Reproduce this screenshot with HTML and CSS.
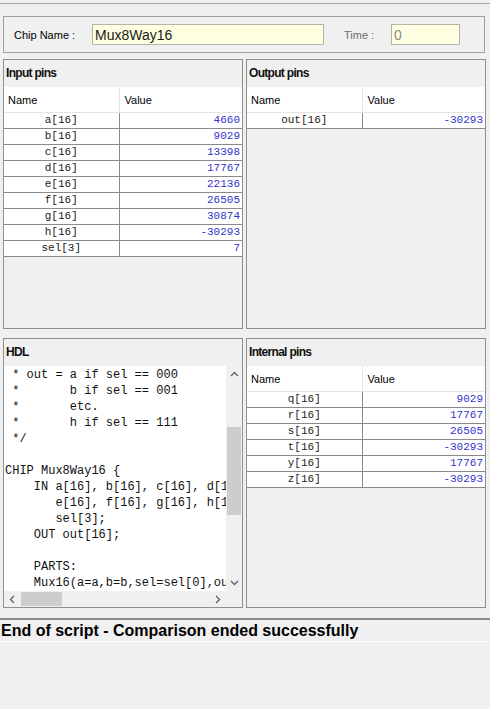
FILE: index.html
```html
<!DOCTYPE html>
<html>
<head>
<meta charset="utf-8">
<link rel="stylesheet" href="styles.css">
</head>
<body>
<div class="app">
  <div class="topstrip"></div>

  <div class="chipbar">
    <span class="lbl chiplbl">Chip Name :</span>
    <div class="field namefield">Mux8Way16</div>
    <span class="lbl timelbl">Time :</span>
    <div class="field timefield">0</div>
  </div>

  <div class="grid">
    <section class="panel">
      <div class="phead">Input pins</div>
      <table class="pins">
        <colgroup><col class="c-name"><col></colgroup>
        <thead><tr><th>Name</th><th>Value</th></tr></thead>
        <tbody>
          <tr><td class="n">a[16]</td><td class="v">4660</td></tr>
          <tr><td class="n">b[16]</td><td class="v">9029</td></tr>
          <tr><td class="n">c[16]</td><td class="v">13398</td></tr>
          <tr><td class="n">d[16]</td><td class="v">17767</td></tr>
          <tr><td class="n">e[16]</td><td class="v">22136</td></tr>
          <tr><td class="n">f[16]</td><td class="v">26505</td></tr>
          <tr><td class="n">g[16]</td><td class="v">30874</td></tr>
          <tr><td class="n">h[16]</td><td class="v">-30293</td></tr>
          <tr><td class="n">sel[3]</td><td class="v">7</td></tr>
        </tbody>
      </table>
    </section>

    <section class="panel">
      <div class="phead">Output pins</div>
      <table class="pins">
        <colgroup><col class="c-name"><col></colgroup>
        <thead><tr><th>Name</th><th>Value</th></tr></thead>
        <tbody>
          <tr><td class="n">out[16]</td><td class="v">-30293</td></tr>
        </tbody>
      </table>
    </section>

    <section class="panel">
      <div class="phead">HDL</div>
      <div class="codebox">
        <pre class="code"> * out = a if sel == 000
 *       b if sel == 001
 *       etc.
 *       h if sel == 111
 */

CHIP Mux8Way16 {
    IN a[16], b[16], c[16], d[16],
       e[16], f[16], g[16], h[16],
       sel[3];
    OUT out[16];

    PARTS:
    Mux16(a=a,b=b,sel=sel[0],out=ab);</pre>
        <div class="vscroll">
          <div class="arrow"><svg width="9" height="6" viewBox="0 0 9 6"><path d="M1 5 L4.5 1.5 L8 5" fill="none" stroke="#606060" stroke-width="1.3"/></svg></div>
          <div class="vtrack"><div class="vthumb"></div></div>
          <div class="arrow"><svg width="9" height="6" viewBox="0 0 9 6"><path d="M1 1 L4.5 4.5 L8 1" fill="none" stroke="#606060" stroke-width="1.3"/></svg></div>
        </div>
        <div class="hscroll">
          <div class="arrow"><svg width="6" height="9" viewBox="0 0 6 9"><path d="M5 1 L1.5 4.5 L5 8" fill="none" stroke="#606060" stroke-width="1.3"/></svg></div>
          <div class="htrack"><div class="hthumb"></div></div>
          <div class="arrow"><svg width="6" height="9" viewBox="0 0 6 9"><path d="M1 1 L4.5 4.5 L1 8" fill="none" stroke="#606060" stroke-width="1.3"/></svg></div>
        </div>
        <div class="corner"></div>
      </div>
    </section>

    <section class="panel">
      <div class="phead">Internal pins</div>
      <table class="pins">
        <colgroup><col class="c-name"><col></colgroup>
        <thead><tr><th>Name</th><th>Value</th></tr></thead>
        <tbody>
          <tr><td class="n">q[16]</td><td class="v">9029</td></tr>
          <tr><td class="n">r[16]</td><td class="v">17767</td></tr>
          <tr><td class="n">s[16]</td><td class="v">26505</td></tr>
          <tr><td class="n">t[16]</td><td class="v">-30293</td></tr>
          <tr><td class="n">y[16]</td><td class="v">17767</td></tr>
          <tr><td class="n">z[16]</td><td class="v">-30293</td></tr>
        </tbody>
      </table>
    </section>
  </div>

  <div class="status">End of script - Comparison ended successfully</div>
</div>
</body>
</html>
```

FILE: styles.css
```css
html, body {
  margin: 0;
  padding: 0;
  background: #f0f0f0;
}
body {
  font-family: "Liberation Sans", Arial, sans-serif;
  color: #000;
}
.app {
  width: 490px;
  height: 709px;
  overflow: hidden;
}
.topstrip {
  height: 3px;
  border-bottom: 1px solid #a8a8a8;
}
.chipbar {
  margin: 12px 0 0 3px;
  width: 480px;
  height: 35px;
  border: 1px solid #a0a0a0;
  display: flex;
  align-items: center;
}
.lbl {
  font-size: 11px;
}
.chiplbl {
  margin-left: 10px;
  width: 78px;
}
.field {
  height: 19px;
  border: 1px solid #b4b4a8;
  background: #ffffe1;
  font-size: 14px;
  line-height: 20px;
  padding-left: 2px;
  box-sizing: content-box;
}
.namefield {
  width: 228px;
  color: #1a1a1a;
}
.timelbl {
  margin-left: 20px;
  width: 47px;
  color: #6e6e6e;
}
.timefield {
  width: 65px;
  color: #8a8a8a;
}

.grid {
  margin: 6px 0 0 3px;
  display: grid;
  grid-template-columns: 240px 240px;
  grid-template-rows: 270px 270px;
  column-gap: 3px;
  row-gap: 9px;
}
.panel {
  border: 1px solid #909090;
  display: flex;
  flex-direction: column;
  overflow: hidden;
}
.phead {
  height: 27px;
  flex: none;
  font-size: 12px;
  font-weight: bold;
  letter-spacing: -0.7px;
  line-height: 27px;
  padding-left: 2px;
  color: #111;
}

.pins {
  width: 100%;
  border-collapse: collapse;
  table-layout: fixed;
}
.c-name {
  width: 115px;
}
.pins th {
  height: 25px;
  background: #fff;
  text-align: left;
  font-weight: normal;
  font-size: 11px;
  padding: 0 0 0 4px;
  border-right: 1px solid #e4e4e4;
  border-bottom: 1px solid #e4e4e4;
}
.pins th:last-child {
  border-right: none;
  padding-left: 5px;
}
.pins td {
  height: 15px;
  padding: 0;
  background: #fff;
  font-family: "Liberation Mono", "Courier New", monospace;
  font-size: 11px;
  line-height: 15px;
  border-bottom: 1px solid #8a8a8a;
  color: #222;
}
.pins td.n {
  text-align: center;
  border-right: 1px solid #8a8a8a;
}
.pins td.v {
  text-align: right;
  padding-right: 2px;
  color: #3333cc;
}

.codebox {
  flex: 1;
  display: grid;
  grid-template-columns: 1fr 16px;
  grid-template-rows: 1fr 16px;
  min-height: 0;
}
.code {
  margin: 0;
  background: #fff;
  font-family: "Liberation Mono", "Courier New", monospace;
  font-size: 12px;
  line-height: 16px;
  padding: 1px 0 0 1px;
  overflow: hidden;
  white-space: pre;
  color: #111;
}
.vscroll {
  display: flex;
  flex-direction: column;
  background: #f0f0f0;
}
.arrow {
  flex: none;
  width: 16px;
  height: 16px;
  display: flex;
  align-items: center;
  justify-content: center;
}
.vtrack {
  flex: 1;
}
.vthumb {
  margin: 45px 0 0 1px;
  width: 14px;
  height: 88px;
  background: #cdcdcd;
}
.hscroll {
  display: flex;
  background: #f0f0f0;
}
.htrack {
  flex: 1;
}
.hthumb {
  margin: 1px 0 0 1px;
  width: 41px;
  height: 14px;
  background: #cdcdcd;
}
.corner {
  background: #f0f0f0;
}

.status {
  margin-top: 10px;
  border-top: 2px solid #8c8c8c;
  border-bottom: 1px solid #ffffff;
  height: 21px;
  font-size: 16px;
  font-weight: bold;
  line-height: 22px;
  padding-left: 1px;
}
```
